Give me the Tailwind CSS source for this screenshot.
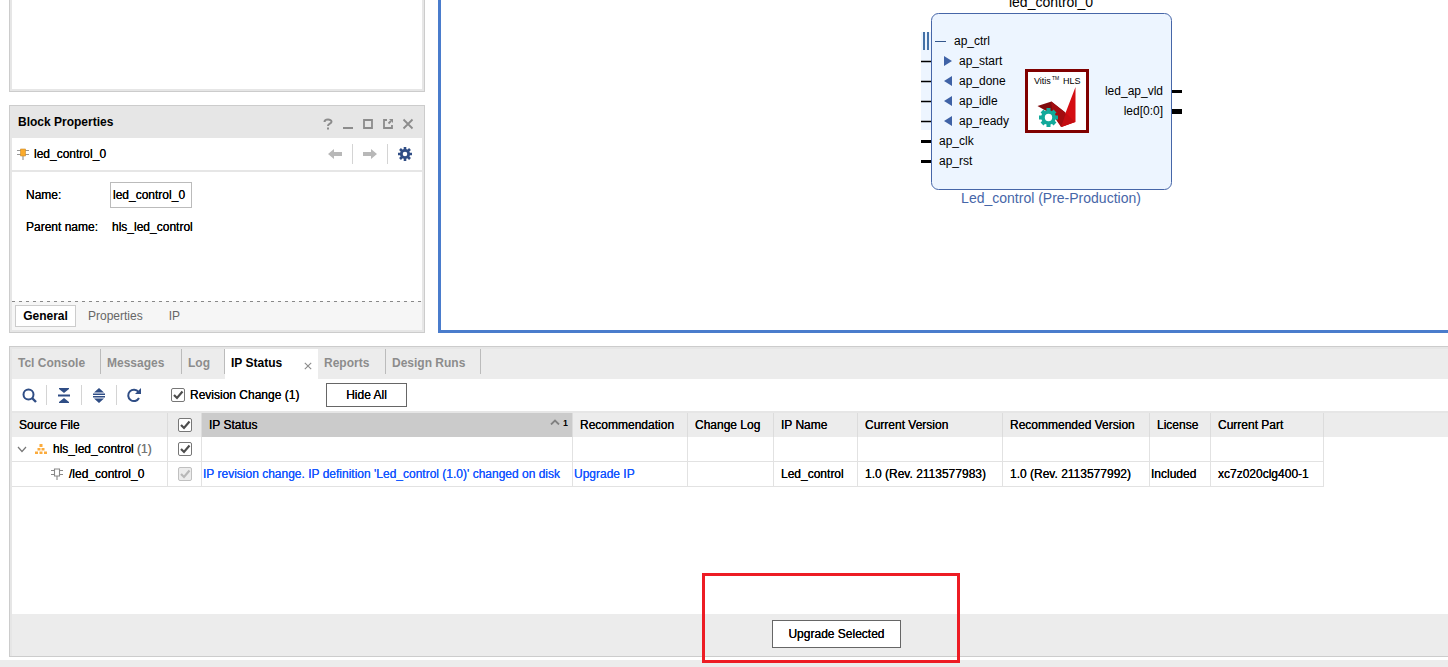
<!DOCTYPE html>
<html lang="en">
<head>
  <meta charset="UTF-8" />
  <meta name="viewport" content="width=device-width, initial-scale=1" />
  <title>Block Design - IP Status</title>
  <script src="https://cdn.jsdelivr.net/npm/@tailwindcss/browser@4"></script>
</head>
<body class="bg-white text-black text-[12px] leading-4 font-['Liberation_Sans',Arial,sans-serif] min-h-screen flex flex-col overflow-x-hidden">

<!-- ICONS -->
<svg class="hidden">
  <symbol id="tick" viewBox="0 0 14 14"><path d="M3 7l3 3 5.500-6.500" fill="none" stroke="currentColor" stroke-width="2.200"/></symbol>
</svg>

<!-- TOP: PANELS + DIAGRAM -->
<div class="flex pl-[9px] gap-[13px]">

  <div class="w-[416px] shrink-0 flex flex-col gap-[13px]">

    <!-- SOURCES (bottom edge only) -->
    <section class="h-[92px] border border-t-0 border-[#cccccc] bg-[#e6e6e6] px-[2px] pb-[2px]">
      <div class="h-full bg-white"></div>
    </section>

    <!-- BLOCK PROPERTIES -->
    <section class="border border-[#cccccc] bg-[#e6e6e6] px-[2px] pb-[2px] flex flex-col">
      <header class="h-8 flex items-center justify-between pl-[6px] pr-2">
        <h2 class="font-bold">Block Properties</h2>
        <div class="flex gap-2 pt-1 text-[#8c8c8c]">
          <button aria-label="Help" class="w-3 h-3"><svg class="w-3 h-3" viewBox="0 0 12 12"><path d="M2.500 4C2.500 .8 9.500 .8 9.500 3.800 9.500 5.800 6 5.600 6 8M6 9.500v2" fill="none" stroke="currentColor" stroke-width="2"/></svg></button>
          <button aria-label="Minimize" class="w-3 h-3"><svg class="w-3 h-3" viewBox="0 0 12 12"><path d="M1 10h10" stroke="currentColor" stroke-width="2"/></svg></button>
          <button aria-label="Maximize" class="w-3 h-3"><svg class="w-3 h-3" viewBox="0 0 12 12"><path d="M2 2h8v8H2z" fill="none" stroke="currentColor" stroke-width="1.800"/></svg></button>
          <button aria-label="Float" class="w-3 h-3"><svg class="w-3 h-3" viewBox="0 0 12 12"><path d="M5 2H2v8h8V7M6.500 5.500L9 3" fill="none" stroke="currentColor" stroke-width="1.800"/><path d="M7 1h4v4z" fill="currentColor"/></svg></button>
          <button aria-label="Close" class="w-3 h-3"><svg class="w-3 h-3" viewBox="0 0 12 12"><path d="M1.500 1.500l9 9M10.500 1.500l-9 9" stroke="currentColor" stroke-width="1.800"/></svg></button>
        </div>
      </header>

      <div class="h-[34px] bg-white border-b-2 border-[#e6e6e6] flex items-center justify-between pl-[5px] pr-[10px]">
        <div class="flex items-center gap-[5px] [text-shadow:0_0_0_currentColor]">
          <svg class="w-3 h-3" viewBox="0 0 12 12"><path d="M0 2.500h12M0 6.500h12M6 8v4" stroke="#999" stroke-width="1.200"/><path d="M3.500 1h5v7h-5z" fill="#fbab2c" stroke="#c98a2c" stroke-width=".6"/></svg>
          <span>led_control_0</span>
        </div>
        <div class="flex items-center gap-[10px]">
          <button aria-label="Back"><svg class="w-[14px] h-3" viewBox="0 0 14 12"><path d="M0 6l6-5v3h8v4H6v3z" fill="#b8b8b8"/></svg></button>
          <span class="w-px h-5 bg-[#d4d4d4]"></span>
          <button aria-label="Forward"><svg class="w-[14px] h-3" viewBox="0 0 14 12"><path d="M14 6L8 1v3H0v4h8v3z" fill="#b8b8b8"/></svg></button>
          <span class="w-px h-5 bg-[#d4d4d4]"></span>
          <button aria-label="Settings"><svg class="w-[14px] h-[14px]" viewBox="0 0 14 14"><circle cx="7" cy="7" r="3.700" fill="none" stroke="#2f4d85" stroke-width="2.800"/><path d="M7 0v3M7 11v3M0 7h3M11 7h3M2 2l2 2M10 10l2 2M2 12l2-2M10 4l2-2" stroke="#2f4d85" stroke-width="2.600"/></svg></button>
        </div>
      </div>

      <div class="h-[129px] bg-white pt-[10px] pl-[14px] [text-shadow:0_0_0_currentColor]">
        <div class="flex items-center h-[26px]">
          <label for="name" class="w-[84px]">Name:</label>
          <input id="name" type="text" value="led_control_0" class="w-[82px] h-[26px] border border-[#bbbbbb] px-[2px] [text-shadow:0_0_0_currentColor]" />
        </div>
        <div class="flex items-center h-[38px]">
          <span class="w-[86px]">Parent name:</span>
          <span>hls_led_control</span>
        </div>
      </div>

      <svg class="w-full h-px bg-[#f6f6f6]"><path d="M0 .5h2000" stroke="#888" stroke-dasharray="3 4"/></svg>
      <nav class="h-7 bg-[#f6f6f6] flex items-center pl-[3px] text-[#666666] [text-shadow:0_0_0_currentColor]">
        <button class="h-[22px] w-[61px] bg-white border border-[#cccccc] font-bold text-black [text-shadow:none]">General</button>
        <button class="ml-3">Properties</button>
        <button class="ml-[26px]">IP</button>
      </nav>
    </section>
  </div>

  <!-- DIAGRAM -->
  <main class="relative flex-1 border-l-[3px] border-b-[3px] border-[#4a7ccc] bg-white overflow-hidden">
    <svg class="absolute left-[470px] top-0 w-[280px] h-[215px]" viewBox="911 0 280 215" font-size="12">
      <text x="1051" y="7" font-size="14" text-anchor="middle">led_control_0</text>
      <rect x="921" y="32" width="12" height="98" fill="#edf5ff"/>
      <rect x="931.500" y="13.500" width="240" height="176" rx="7" fill="#edf5ff" stroke="#4666a8"/>
      <path d="M924 32v18M928 32v18" stroke="#4472a8" stroke-width="2"/>
      <path d="M935 41.500h11" stroke="#34568c"/>
      <path d="M921 61.500h10M921 81.500h10M921 101.500h10M921 121.500h10" stroke="#000" stroke-width="1.500"/>
      <path d="M921 141.500h10M921 161.500h10M1172 91.500h10" stroke="#000" stroke-width="3"/>
      <path d="M1172 111.500h10" stroke="#000" stroke-width="5"/>
      <path d="M944 56v10l8-5zM952 76v10l-8-5zM952 96v10l-8-5zM952 116v10l-8-5z" fill="#3f62a6"/>
      <text x="954" y="45">ap_ctrl</text>
      <text x="959" y="65">ap_start</text>
      <text x="959" y="85">ap_done</text>
      <text x="959" y="105">ap_idle</text>
      <text x="959" y="125">ap_ready</text>
      <text x="939" y="145">ap_clk</text>
      <text x="939" y="165">ap_rst</text>
      <text x="1163" y="95" text-anchor="end">led_ap_vld</text>
      <text x="1163" y="115" text-anchor="end">led[0:0]</text>
      <text x="1051" y="203" font-size="14" text-anchor="middle" fill="#4666a8">Led_control (Pre-Production)</text>
      <!-- Vitis HLS logo -->
      <rect x="1026.500" y="70.500" width="61" height="61" fill="#fff" stroke="#800000" stroke-width="3"/>
      <text x="1034" y="84" font-size="9">Vitis</text>
      <text x="1052" y="80" font-size="5">TM</text>
      <text x="1063" y="84" font-size="9">HLS</text>
      <path d="M1037.500 106l14-4.500 14 11-4 14-9-12z" fill="#800a0c"/>
      <path d="M1051 101.500l15 12 9 8-14 5.500-8-12z" fill="#a30c10"/>
      <path d="M1075.500 87v35l-14 5 7-9-3-5z" fill="#d40d12"/>
      <path d="M1061 127l14-5-9-9z" fill="#c30d11"/>
      <circle cx="1048.500" cy="117.500" r="5.500" fill="#fff" stroke="#12a99a" stroke-width="3.600"/>
      <path d="M1048.500 108v3M1048.500 124v3M1039 117.500h3M1055 117.500h3M1042 111l2 2M1053 122l2 2M1042 124l2-2M1053 113l2-2" stroke="#12a99a" stroke-width="4"/>
    </svg>
  </main>
</div>

<!-- BOTTOM PANEL -->
<section class="flex-1 mt-[13px] ml-[9px] border-l border-t border-b border-[#cccccc] bg-[#e6e6e6] pl-[2px] pt-[2px] flex flex-col">

  <!-- TABS -->
  <nav class="h-[30px] bg-[#ececec] flex font-bold text-[#8c8c8c]">
    <button class="h-[25px] w-[89px] pl-[6px] pt-[3px] text-left border-r border-[#bbbbbb]">Tcl Console</button>
    <button class="h-[25px] w-[81px] pl-[6px] pt-[3px] text-left border-r border-[#bbbbbb]">Messages</button>
    <button class="h-[25px] w-[43px] pl-[6px] pt-[3px] text-left border-r border-[#bbbbbb]">Log</button>
    <div class="w-[93px] bg-white flex justify-between pl-[6px] pr-[6px]">
      <button class="text-black pb-[2px]">IP Status</button>
      <button aria-label="Close tab" class="pt-[3px]"><svg class="w-2 h-2" viewBox="0 0 10 10"><path d="M1 1l8 8M9 1l-8 8" stroke="#8c8c8c" stroke-width="1.400"/></svg></button>
    </div>
    <button class="h-[25px] w-[68px] pl-[6px] pt-[3px] text-left border-r border-[#bbbbbb]">Reports</button>
    <button class="h-[25px] w-[95px] pl-[6px] pt-[3px] text-left border-r border-[#bbbbbb]">Design Runs</button>
  </nav>

  <!-- TOOLBAR -->
  <div class="h-8 bg-white flex items-center pl-[10px] text-[#2f4d85]">
    <button aria-label="Search"><svg class="w-[15px] h-[15px]" viewBox="0 0 15 15"><circle cx="6.500" cy="6.500" r="5" fill="none" stroke="currentColor" stroke-width="2"/><path d="M10 10l4 4" stroke="currentColor" stroke-width="2.400"/></svg></button>
    <span class="w-px h-5 bg-[#d4d4d4] mx-[9px]"></span>
    <button aria-label="Collapse all" class="w-4"><svg class="w-4 h-[15px]" viewBox="0 0 16 15"><path d="M3 0h10v1L8 5 3 1zM2 6.500h12v2H2zM3 15h10v-1L8 10l-5 4z" fill="currentColor"/></svg></button>
    <span class="w-px h-5 bg-[#d4d4d4] mx-[9px]"></span>
    <button aria-label="Expand all" class="w-4"><svg class="w-4 h-[15px]" viewBox="0 0 16 15"><path d="M8 0l5 4.500H3zM2 5.500h12v1.500H2zM2 8h12v1.500H2zM8 15l5-4.500H3z" fill="currentColor"/></svg></button>
    <span class="w-px h-5 bg-[#d4d4d4] mx-[9px]"></span>
    <button aria-label="Refresh" class="w-4"><svg class="w-4 h-[15px]" viewBox="0 0 16 15"><path d="M12.500 4A5.700 5.700 0 1 0 13 10" fill="none" stroke="currentColor" stroke-width="2"/><path d="M15 0v6H9z" fill="currentColor"/></svg></button>
    <label class="ml-[29px] w-[132px] flex items-center gap-[5px] text-[#4d4d4d]">
      <span class="grid">
        <input type="checkbox" checked class="appearance-none col-start-1 row-start-1 w-[14px] h-[14px] border border-[#777777] rounded-[2px]" />
        <svg class="col-start-1 row-start-1 w-[14px] h-[14px] pointer-events-none"><use href="#tick"/></svg>
      </span>
      <span class="text-black [text-shadow:0_0_0_currentColor]">Revision Change (1)</span>
    </label>
    <button class="ml-[23px] w-[81px] h-6 border border-[#666666] bg-white text-black [text-shadow:0_0_0_currentColor]">Hide All</button>
  </div>

  <!-- IP TABLE -->
  <div class="flex-1 bg-white border-t-2 border-[#e6e6e6] [text-shadow:0_0_0_currentColor]">
    <table class="w-full table-fixed border-separate border-spacing-0 whitespace-nowrap text-left">
      <colgroup>
        <col class="w-[156px]"><col class="w-[34px]"><col class="w-[371px]"><col class="w-[115px]"><col class="w-[86px]"><col class="w-[84px]"><col class="w-[145px]"><col class="w-[147px]"><col class="w-[61px]"><col class="w-[113px]"><col>
      </colgroup>
      <thead>
        <tr class="h-6 bg-[#ececec] *:font-normal *:p-0 *:border-r *:border-[#dcdcdc]">
          <th><span class="pl-[7px]">Source File</span></th>
          <th>
            <span class="grid w-[14px] mx-auto text-[#4d4d4d]">
              <input type="checkbox" checked aria-label="Select all" class="appearance-none col-start-1 row-start-1 w-[14px] h-[14px] border border-[#777777] bg-white rounded-[2px]" />
              <svg class="col-start-1 row-start-1 w-[14px] h-[14px] pointer-events-none"><use href="#tick"/></svg>
            </span>
          </th>
          <th class="bg-[#cbcbcb]">
            <div class="flex items-center pl-[7px] pr-1">
              <span class="flex-1">IP Status</span>
              <svg class="w-[10px] h-[6px] mr-[3px] mb-[6px]" viewBox="0 0 10 6"><path d="M1 5.500l4-4 4 4" fill="none" stroke="#808080" stroke-width="1.800"/></svg>
              <span class="text-[9px] leading-3 mb-1">1</span>
            </div>
          </th>
          <th><span class="pl-[7px]">Recommendation</span></th>
          <th><span class="pl-[7px]">Change Log</span></th>
          <th><span class="pl-[7px]">IP Name</span></th>
          <th><span class="pl-[7px]">Current Version</span></th>
          <th><span class="pl-[7px]">Recommended Version</span></th>
          <th><span class="pl-[7px]">License</span></th>
          <th><span class="pl-[7px]">Current Part</span></th>
          <td class="border-0!"></td>
        </tr>
      </thead>
      <tbody>
        <tr class="h-[25px] *:p-0 *:border-r *:border-b *:border-[#e2e2e2]">
          <td>
            <div class="flex items-center pl-[5px]">
              <svg class="w-[10px] h-[10px]" viewBox="0 0 10 10"><path d="M1 3l4 4.500L9 3" fill="none" stroke="#777" stroke-width="1.200"/></svg>
              <svg class="w-3 h-3 ml-2" viewBox="0 0 12 12"><path d="M4.500 1h3v3h-3zM2.500 5h3v2.500h-3zM6.500 5h3v2.500h-3zM0 8.500h3V11H0zM4.500 8.500h3V11h-3zM9 8.500h3V11H9z" fill="#fbab3c"/></svg>
              <span class="ml-[6px]">hls_led_control <span class="text-[#777777]">(1)</span></span>
            </div>
          </td>
          <td>
            <span class="grid w-[14px] mx-auto text-[#4d4d4d]">
              <input type="checkbox" checked aria-label="Select hls_led_control" class="appearance-none col-start-1 row-start-1 w-[14px] h-[14px] border border-[#777777] bg-white rounded-[2px]" />
              <svg class="col-start-1 row-start-1 w-[14px] h-[14px] pointer-events-none"><use href="#tick"/></svg>
            </span>
          </td>
          <td></td><td></td><td></td><td></td><td></td><td></td><td></td><td></td>
          <td class="border-0!"></td>
        </tr>
        <tr class="h-[25px] *:p-0 *:border-r *:border-b *:border-[#e2e2e2]">
          <td>
            <div class="flex items-center pl-[39px] gap-[6px]">
              <svg class="w-3 h-3" viewBox="0 0 12 12"><path d="M3.500 1h5v7h-5zM0 2.500h3.500M0 6.500h3.500M8.500 2.500H12M8.500 6.500H12M6 8v4" fill="none" stroke="#888" stroke-width="1.100"/></svg>
              <span>/led_control_0</span>
            </div>
          </td>
          <td>
            <span class="grid w-[14px] mx-auto text-[#b8b8b8]">
              <input type="checkbox" checked disabled aria-label="Select led_control_0" class="appearance-none col-start-1 row-start-1 w-[14px] h-[14px] border border-[#c0c0c0] bg-[#ececec] rounded-[2px]" />
              <svg class="col-start-1 row-start-1 w-[14px] h-[14px] pointer-events-none"><use href="#tick"/></svg>
            </span>
          </td>
          <td><a href="#" class="pl-px text-[#1457ff]">IP revision change. IP definition 'Led_control (1.0)' changed on disk</a></td>
          <td><a href="#" class="pl-px text-[#1457ff]">Upgrade IP</a></td>
          <td></td>
          <td><span class="pl-[7px]">Led_control</span></td>
          <td><span class="pl-[7px]">1.0 (Rev. 2113577983)</span></td>
          <td><span class="pl-[7px]">1.0 (Rev. 2113577992)</span></td>
          <td><span class="pl-px">Included</span></td>
          <td><span class="pl-[7px]">xc7z020clg400-1</span></td>
          <td class="border-0!"></td>
        </tr>
      </tbody>
    </table>
  </div>

  <!-- FOOTER -->
  <footer class="h-[42px] bg-[#ececec] pl-[760px] pt-[6px]">
    <div class="relative w-[129px]">
      <button class="w-full h-7 border border-[#666666] bg-white [text-shadow:0_0_0_currentColor]">Upgrade Selected</button>
      <div class="absolute -left-[70px] -top-[47px] w-[258px] h-[90px] border-[3px] border-[#ed1c24] pointer-events-none"></div>
    </div>
  </footer>
</section>

<div class="h-[7px] mt-[3px] bg-[#ececec]"></div>

</body>
</html>
